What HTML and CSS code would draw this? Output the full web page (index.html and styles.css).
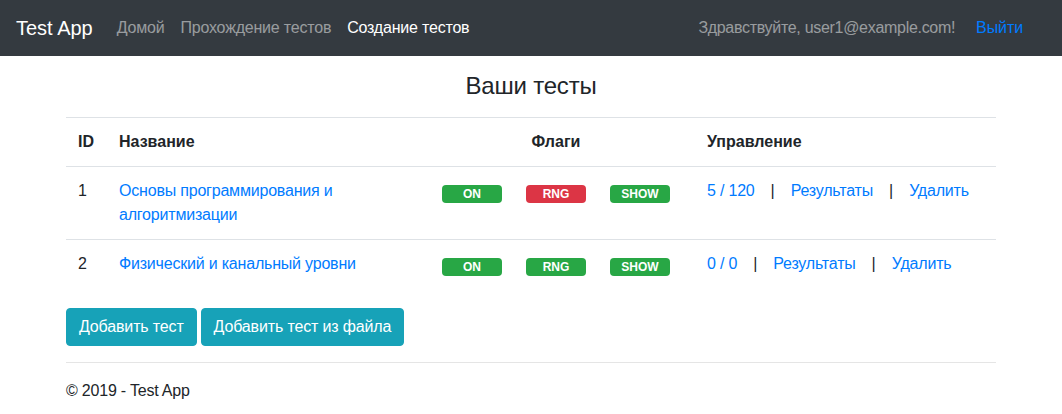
FILE: index.html
```html
<!DOCTYPE html>
<html lang="ru">
<head>
<meta charset="utf-8">
<title>Test App</title>
<link rel="stylesheet" href="styles.css">
</head>
<body>
<nav class="navbar">
  <a class="brand" href="#">Test App</a>
  <ul class="nav-left">
    <li><a class="nav-link" href="#">Домой</a></li>
    <li><a class="nav-link" href="#">Прохождение тестов</a></li>
    <li><a class="nav-link active" href="#">Создание тестов</a></li>
  </ul>
  <div class="nav-right">
    <a class="nav-link greet" href="#">Здравствуйте, user1@example.com!</a>
    <button class="btn-logout" type="button">Выйти</button>
  </div>
</nav>
<main class="container">
  <h4 class="title">Ваши тесты</h4>
  <table class="table">
    <colgroup>
      <col class="c-id"><col class="c-name"><col class="c-flag"><col class="c-flag"><col class="c-flag-last"><col>
    </colgroup>
    <thead>
      <tr>
        <th>ID</th>
        <th>Название</th>
        <th></th>
        <th class="center">Флаги</th>
        <th></th>
        <th>Управление</th>
      </tr>
    </thead>
    <tbody>
      <tr>
        <td>1</td>
        <td><a href="#">Основы программирования и алгоритмизации</a></td>
        <td><span class="badge ok">ON</span></td>
        <td><span class="badge bad">RNG</span></td>
        <td><span class="badge ok">SHOW</span></td>
        <td><a href="#">5 / 120</a><span class="sep">|</span><a href="#">Результаты</a><span class="sep">|</span><a href="#">Удалить</a></td>
      </tr>
      <tr>
        <td>2</td>
        <td><a href="#">Физический и канальный уровни</a></td>
        <td><span class="badge ok">ON</span></td>
        <td><span class="badge ok">RNG</span></td>
        <td><span class="badge ok">SHOW</span></td>
        <td><a href="#">0 / 0</a><span class="sep">|</span><a href="#">Результаты</a><span class="sep">|</span><a href="#">Удалить</a></td>
      </tr>
    </tbody>
  </table>
  <div class="actions">
    <a class="btn" href="#">Добавить тест</a>
    <a class="btn" href="#">Добавить тест из файла</a>
  </div>
  <hr class="rule">
  <footer class="footer">© 2019 - Test App</footer>
</main>
</body>
</html>
```
FILE: styles.css
```css
* { box-sizing: border-box; }
html, body { margin: 0; padding: 0; }
body {
  font-family: "Liberation Sans", Arial, sans-serif;
  font-size: 16px;
  line-height: 1.5;
  letter-spacing: -0.2px;
  color: #212529;
  background: #fff;
}
a { color: #007bff; text-decoration: none; }

.navbar {
  display: flex;
  align-items: center;
  height: 56px;
  padding: 8px 26px 8px 16px;
  background: #343a40;
}
.brand {
  color: #fff;
  font-size: 20px;
  line-height: 30px;
  letter-spacing: 0;
  margin-right: 16px;
}
.nav-left {
  display: flex;
  list-style: none;
  margin: 0;
  padding: 0;
  flex: 1;
}
.nav-link {
  display: block;
  padding: 8px;
  color: rgba(255,255,255,.5);
}
.nav-link.active { color: #fff; }
.greet { letter-spacing: -0.3px; }
.nav-right { display: flex; align-items: center; }
.btn-logout {
  font: inherit;
  letter-spacing: -0.1px;
  color: #007bff;
  background: transparent;
  border: 1px solid transparent;
  padding: 6px 12px;
  line-height: 24px;
  cursor: pointer;
}

.container {
  width: 960px;
  margin: 0 auto;
  padding: 16px 15px 0;
}
.title {
  margin: 0 0 16px;
  font-size: 24px;
  font-weight: 500;
  line-height: 1.2;
  text-align: center;
}
.table {
  width: 100%;
  border-collapse: collapse;
  margin-bottom: 20px;
  table-layout: fixed;
}
.c-id { width: 41px; }
.c-name { width: 323px; }
.c-flag { width: 84px; }
.c-flag-last { width: 97px; }
.table th, .table td {
  padding: 12px;
  border-top: 1px solid #dee2e6;
  text-align: left;
  vertical-align: top;
}
.table th { font-weight: bold; letter-spacing: 0; }
.table th.center { text-align: center; }
.badge {
  display: inline-block;
  width: 60px;
  padding: 3px 0;
  font-size: 12px;
  font-weight: bold;
  line-height: 1;
  letter-spacing: 0;
  color: #fff;
  text-align: center;
  border-radius: 4px;
  vertical-align: -2px;
}
.badge.ok { background: #28a745; }
.badge.bad { background: #dc3545; }
.sep { margin: 0 16px; color: #212529; letter-spacing: 0; }

.actions { display: flex; gap: 4px; }
.btn {
  display: inline-block;
  padding: 6px 12px;
  border: 1px solid #17a2b8;
  border-radius: 4px;
  background: #17a2b8;
  color: #fff;
  line-height: 24px;
  letter-spacing: -0.15px;
}
.rule {
  margin: 16px 0;
  border: 0;
  border-top: 1px solid rgba(0,0,0,.1);
}
.footer { line-height: 24px; }
```
